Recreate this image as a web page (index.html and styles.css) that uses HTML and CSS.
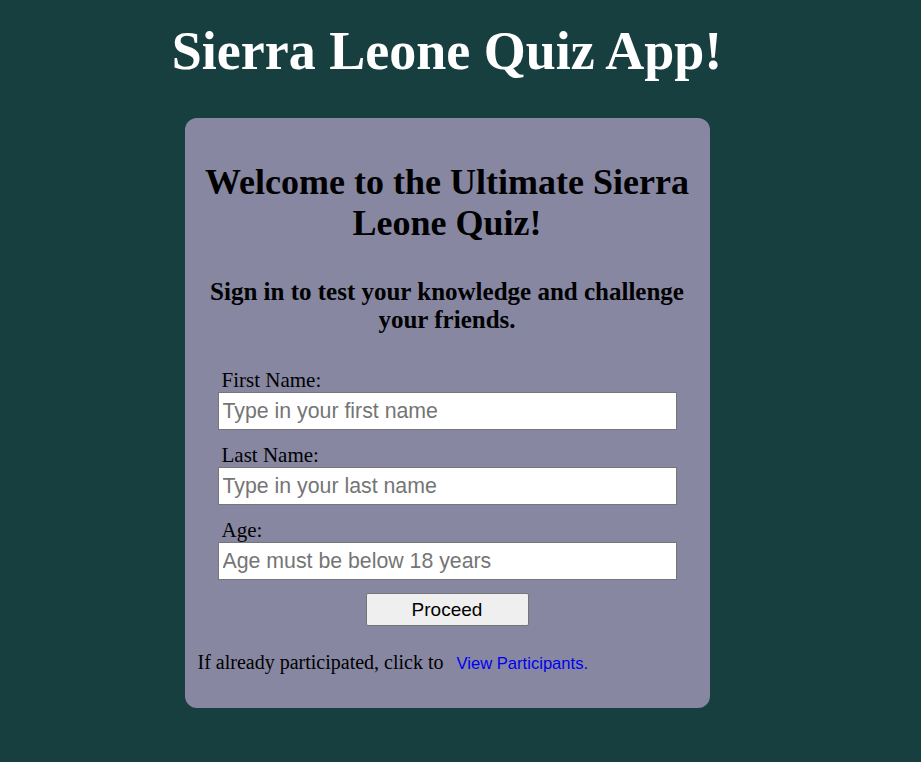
FILE: index.html
```html
<!DOCTYPE html>
<html>
<head>
<meta charset="utf-8">
<link rel="stylesheet" href="styles.css">
</head>
<body>
<div class="page">
  <h1 class="title">Sierra Leone Quiz App!</h1>
  <div class="card">
    <h2 class="welcome">Welcome to the Ultimate Sierra Leone Quiz!</h2>
    <h3 class="sub">Sign in to test your knowledge and challenge your friends.</h3>
    <form class="form">
      <label class="label">First Name:</label>
      <input class="field" type="text" placeholder="Type in your first name">
      <label class="label">Last Name:</label>
      <input class="field" type="text" placeholder="Type in your last name">
      <label class="label">Age:</label>
      <input class="field" type="text" placeholder="Age must be below 18 years">
      <button class="btn" type="button">Proceed</button>
    </form>
    <p class="foot">If already participated, click to <a class="link" href="#">View Participants.</a></p>
  </div>
</div>
</body>
</html>
```
FILE: styles.css
```css
html, body {
  margin: 0;
  padding: 0;
  background: #183f40;
}
body {
  font-family: "Liberation Serif", "Times New Roman", serif;
}
.page {
  width: 894px;
  display: flex;
  flex-direction: column;
  align-items: center;
  padding-top: 20px;
}
.title {
  margin: 0;
  color: #ffffff;
  font-size: 54px;
  font-weight: bold;
  line-height: 62px;
}
.card {
  margin-top: 36px;
  width: 525px;
  height: 590px;
  box-sizing: border-box;
  background: #8787a2;
  border-radius: 12px;
  padding: 44px 10px 0;
  text-align: center;
}
.welcome {
  margin: 0 0;
  font-size: 36px;
  line-height: 41px;
}
.sub {
  margin: 34px 0 0;
  font-size: 25px;
  line-height: 28px;
}
.form {
  display: flex;
  flex-direction: column;
  align-items: flex-start;
  margin: 35px 0 0 23px;
  width: 459px;
}
.label {
  font-size: 21px;
  line-height: 23px;
  margin-left: 4px;
}
.field {
  width: 459px;
  height: 38px;
  box-sizing: border-box;
  border: 1px solid #767676;
  font-family: "Liberation Sans", Arial, sans-serif;
  font-size: 21.3px;
  padding: 0 4px;
  margin: 0 0 14px;
}
.field::placeholder {
  color: #757575;
}
.btn {
  align-self: center;
  margin-top: -1px;
  width: 163px;
  height: 33px;
  font-family: "Liberation Sans", Arial, sans-serif;
  font-size: 19px;
  background: #efefef;
  border: 1px solid #767676;
  border-radius: 2px;
  color: #000;
}
.foot {
  margin: 25px 0 0;
  text-align: left;
  font-size: 20px;
  padding-left: 3px;
}
.link {
  margin-left: 8px;
  color: #0000ee;
  text-decoration: none;
  font-family: "Liberation Sans", Arial, sans-serif;
  font-size: 16.6px;
}
```
